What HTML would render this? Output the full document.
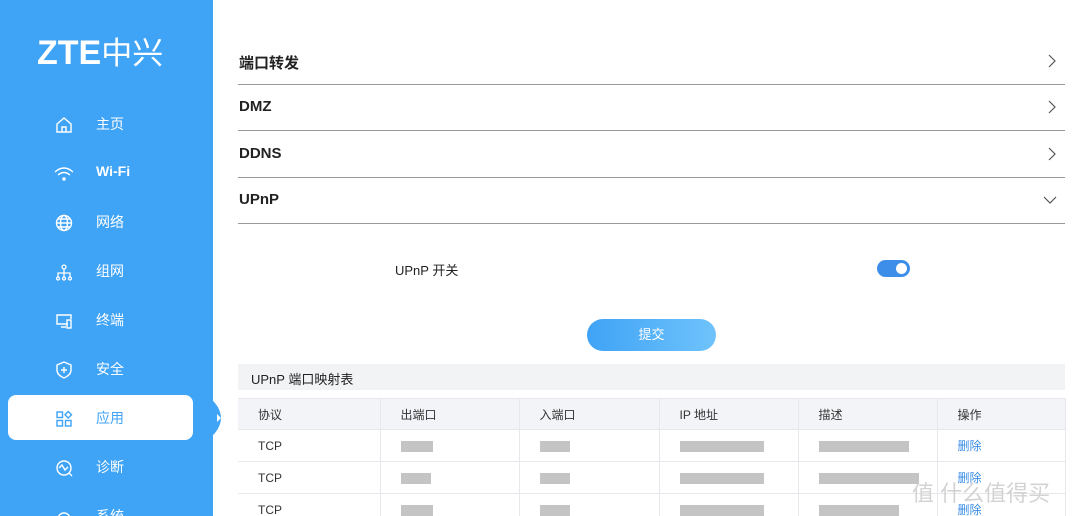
<!DOCTYPE html><html><head><meta charset="utf-8"><style>
*{margin:0;padding:0;box-sizing:border-box}
html,body{width:1080px;height:516px;overflow:hidden}
body{background:#fff;font-family:"Liberation Sans","Noto Sans CJK SC",sans-serif;position:relative}
.side{position:absolute;left:0;top:0;width:213px;height:516px;background:#3fa3f6}
.logo{position:absolute;left:37px;top:28px;color:#fff;font-size:34px;font-weight:bold}
.item{position:absolute;left:0;width:213px;height:44px;color:#fff;font-size:14px}
.item svg{position:absolute;left:54px;top:13px}
.item span{position:absolute;left:96px;top:12px}
.act{position:absolute;left:8px;top:395px;width:185px;height:45px;background:#fff;border-radius:8px}
.notch{position:absolute;left:205px;top:383px;width:26px;height:70px}
.sec{position:absolute;left:238px;width:827px;border-bottom:1px solid #999;font-size:15px;font-weight:bold;color:#222}
.sec span{position:absolute;left:1px}
.sec svg{position:absolute;right:8px}
.tbl{position:absolute;left:238px;top:398px;width:827px;border-collapse:collapse;font-size:12px;color:#333;table-layout:fixed}
.tbl td{border:1px solid #e6e8eb;height:32px;padding-left:20px;white-space:nowrap;overflow:hidden}
.tbl tr:first-child td{background:#f2f4f7;height:31px}
.tbl td:first-child{border-left:none}
.b{display:inline-block;height:11px;background:#c4c4c4;vertical-align:middle}
</style></head><body>
<div class="side">
<div class="logo">ZTE<span style="font-family:'Noto Sans CJK SC';font-size:31px;font-weight:normal">中兴</span></div>
<div class="act"></div>
<div class="item" style="top:102px"><svg width="20" height="20" fill="none" stroke="#fff" stroke-width="1.4"><path d="M3 9L10 3L17 9V17H3Z M8 17V12H12V17"/></svg><span>主页</span></div>
<div class="item" style="top:151px"><svg width="20" height="20" fill="none" stroke="#fff" stroke-width="1.4"><path d="M1 8Q10 0 19 8M4 11Q10 6 16 11"/><circle cx="10" cy="15" r="1" fill="#fff"/></svg><span style="font-weight:bold">Wi-Fi</span></div>
<div class="item" style="top:200px"><svg width="20" height="20" fill="none" stroke="#fff" stroke-width="1.4"><circle cx="10" cy="10" r="7.5"/><ellipse cx="10" cy="10" rx="3.5" ry="7.5"/><path d="M2.5 10H17.5M4 6H16M4 14H16"/></svg><span>网络</span></div>
<div class="item" style="top:249px"><svg width="20" height="20" fill="none" stroke="#fff" stroke-width="1.3"><circle cx="10" cy="5" r="2"/><path d="M10 7V11M4 15V11H16V15M10 11V15"/><circle cx="4" cy="16.5" r="1.5"/><circle cx="10" cy="16.5" r="1.5"/><circle cx="16" cy="16.5" r="1.5"/></svg><span>组网</span></div>
<div class="item" style="top:298px"><svg width="20" height="20" fill="none" stroke="#fff" stroke-width="1.4"><path d="M14 13H3V4H17V8M7 16H12"/><rect x="13" y="9" width="4" height="8"/></svg><span>终端</span></div>
<div class="item" style="top:347px"><svg width="20" height="20" fill="none" stroke="#fff" stroke-width="1.4"><path d="M10 2L17 5V10Q17 15 10 18Q3 15 3 10V5Z M10 7V13M7 10H13"/></svg><span>安全</span></div>
<div class="item" style="top:396px;color:#3fa3f6"><svg width="20" height="20" fill="none" stroke="#3fa3f6" stroke-width="1.4"><rect x="3" y="3" width="5.5" height="5.5"/><rect x="3" y="11.5" width="5.5" height="5.5"/><rect x="11.5" y="11.5" width="5.5" height="5.5"/><path d="M14.2 2.5L17.5 5.8L14.2 9L11 5.8Z"/></svg><span>应用</span></div>
<div class="item" style="top:445px"><svg width="20" height="20" fill="none" stroke="#fff" stroke-width="1.4"><circle cx="10" cy="10" r="7"/><path d="M5 10L8 7L11 12L14 9M15 15L18 18"/></svg><span>诊断</span></div>
<div class="item" style="top:494px"><svg width="20" height="20" fill="none" stroke="#fff" stroke-width="1.4"><circle cx="10" cy="12" r="6"/></svg><span>系统</span></div>
</div>
<svg class="notch" viewBox="0 0 26 70"><path d="M0 0Q0 10 10 20Q22 35 10 50Q0 60 0 70Z" fill="#3fa3f6"/><path d="M12 31L16 35L12 39Z" fill="#fff"/></svg>
<div class="sec" style="top:40px;height:45px"><span style="top:12px">端口转发</span><svg style="top:14px" width="10" height="14" fill="none" stroke="#555" stroke-width="1.2"><path d="M2 1L8 7L2 13"/></svg></div>
<div class="sec" style="top:85px;height:46px"><span style="top:13px">DMZ</span><svg style="top:15px" width="10" height="14" fill="none" stroke="#555" stroke-width="1.2"><path d="M2 1L8 7L2 13"/></svg></div>
<div class="sec" style="top:131px;height:47px"><span style="top:14px">DDNS</span><svg style="top:16px" width="10" height="14" fill="none" stroke="#555" stroke-width="1.2"><path d="M2 1L8 7L2 13"/></svg></div>
<div class="sec" style="top:178px;height:46px"><span style="top:13px">UPnP</span><svg style="top:17px" width="14" height="10" fill="none" stroke="#555" stroke-width="1.2"><path d="M1 2L7 8L13 2"/></svg></div>
<div style="position:absolute;left:395px;top:260px;font-size:13px;color:#222">UPnP 开关</div>
<div style="position:absolute;left:877px;top:260px;width:33px;height:17px;border-radius:9px;background:#3c8ee8"><div style="position:absolute;right:3px;top:3px;width:11px;height:11px;border-radius:50%;background:#fff"></div></div>
<div style="position:absolute;left:587px;top:319px;width:129px;height:32px;border-radius:16px;background:linear-gradient(90deg,#3fa3f6,#6fc3fb);color:#fff;font-size:13px;text-align:center;line-height:32px">提交</div>
<div style="position:absolute;left:238px;top:364px;width:827px;height:26px;background:#f2f3f5;font-size:13px;color:#222;padding:5px 0 0 13px">UPnP 端口映射表</div>
<table class="tbl">
<colgroup><col style="width:142px"><col style="width:139px"><col style="width:140px"><col style="width:139px"><col style="width:139px"><col style="width:128px"></colgroup>
<tr><td>协议</td><td>出端口</td><td>入端口</td><td>IP 地址</td><td>描述</td><td>操作</td></tr>
<tr><td>TCP</td><td><span class="b" style="width:32px"></span></td><td><span class="b" style="width:30px"></span></td><td><span class="b" style="width:84px"></span></td><td><span class="b" style="width:90px"></span></td><td style="color:#3b8de8">删除</td></tr>
<tr><td>TCP</td><td><span class="b" style="width:30px"></span></td><td><span class="b" style="width:30px"></span></td><td><span class="b" style="width:84px"></span></td><td><span class="b" style="width:100px"></span></td><td style="color:#3b8de8">删除</td></tr>
<tr><td>TCP</td><td><span class="b" style="width:32px"></span></td><td><span class="b" style="width:30px"></span></td><td><span class="b" style="width:84px"></span></td><td><span class="b" style="width:80px"></span></td><td style="color:#3b8de8">删除</td></tr>
</table>
<div style="position:absolute;left:912px;top:476px;font-size:22px;color:#ccc;opacity:.85">值 什么值得买</div>
</body></html>
